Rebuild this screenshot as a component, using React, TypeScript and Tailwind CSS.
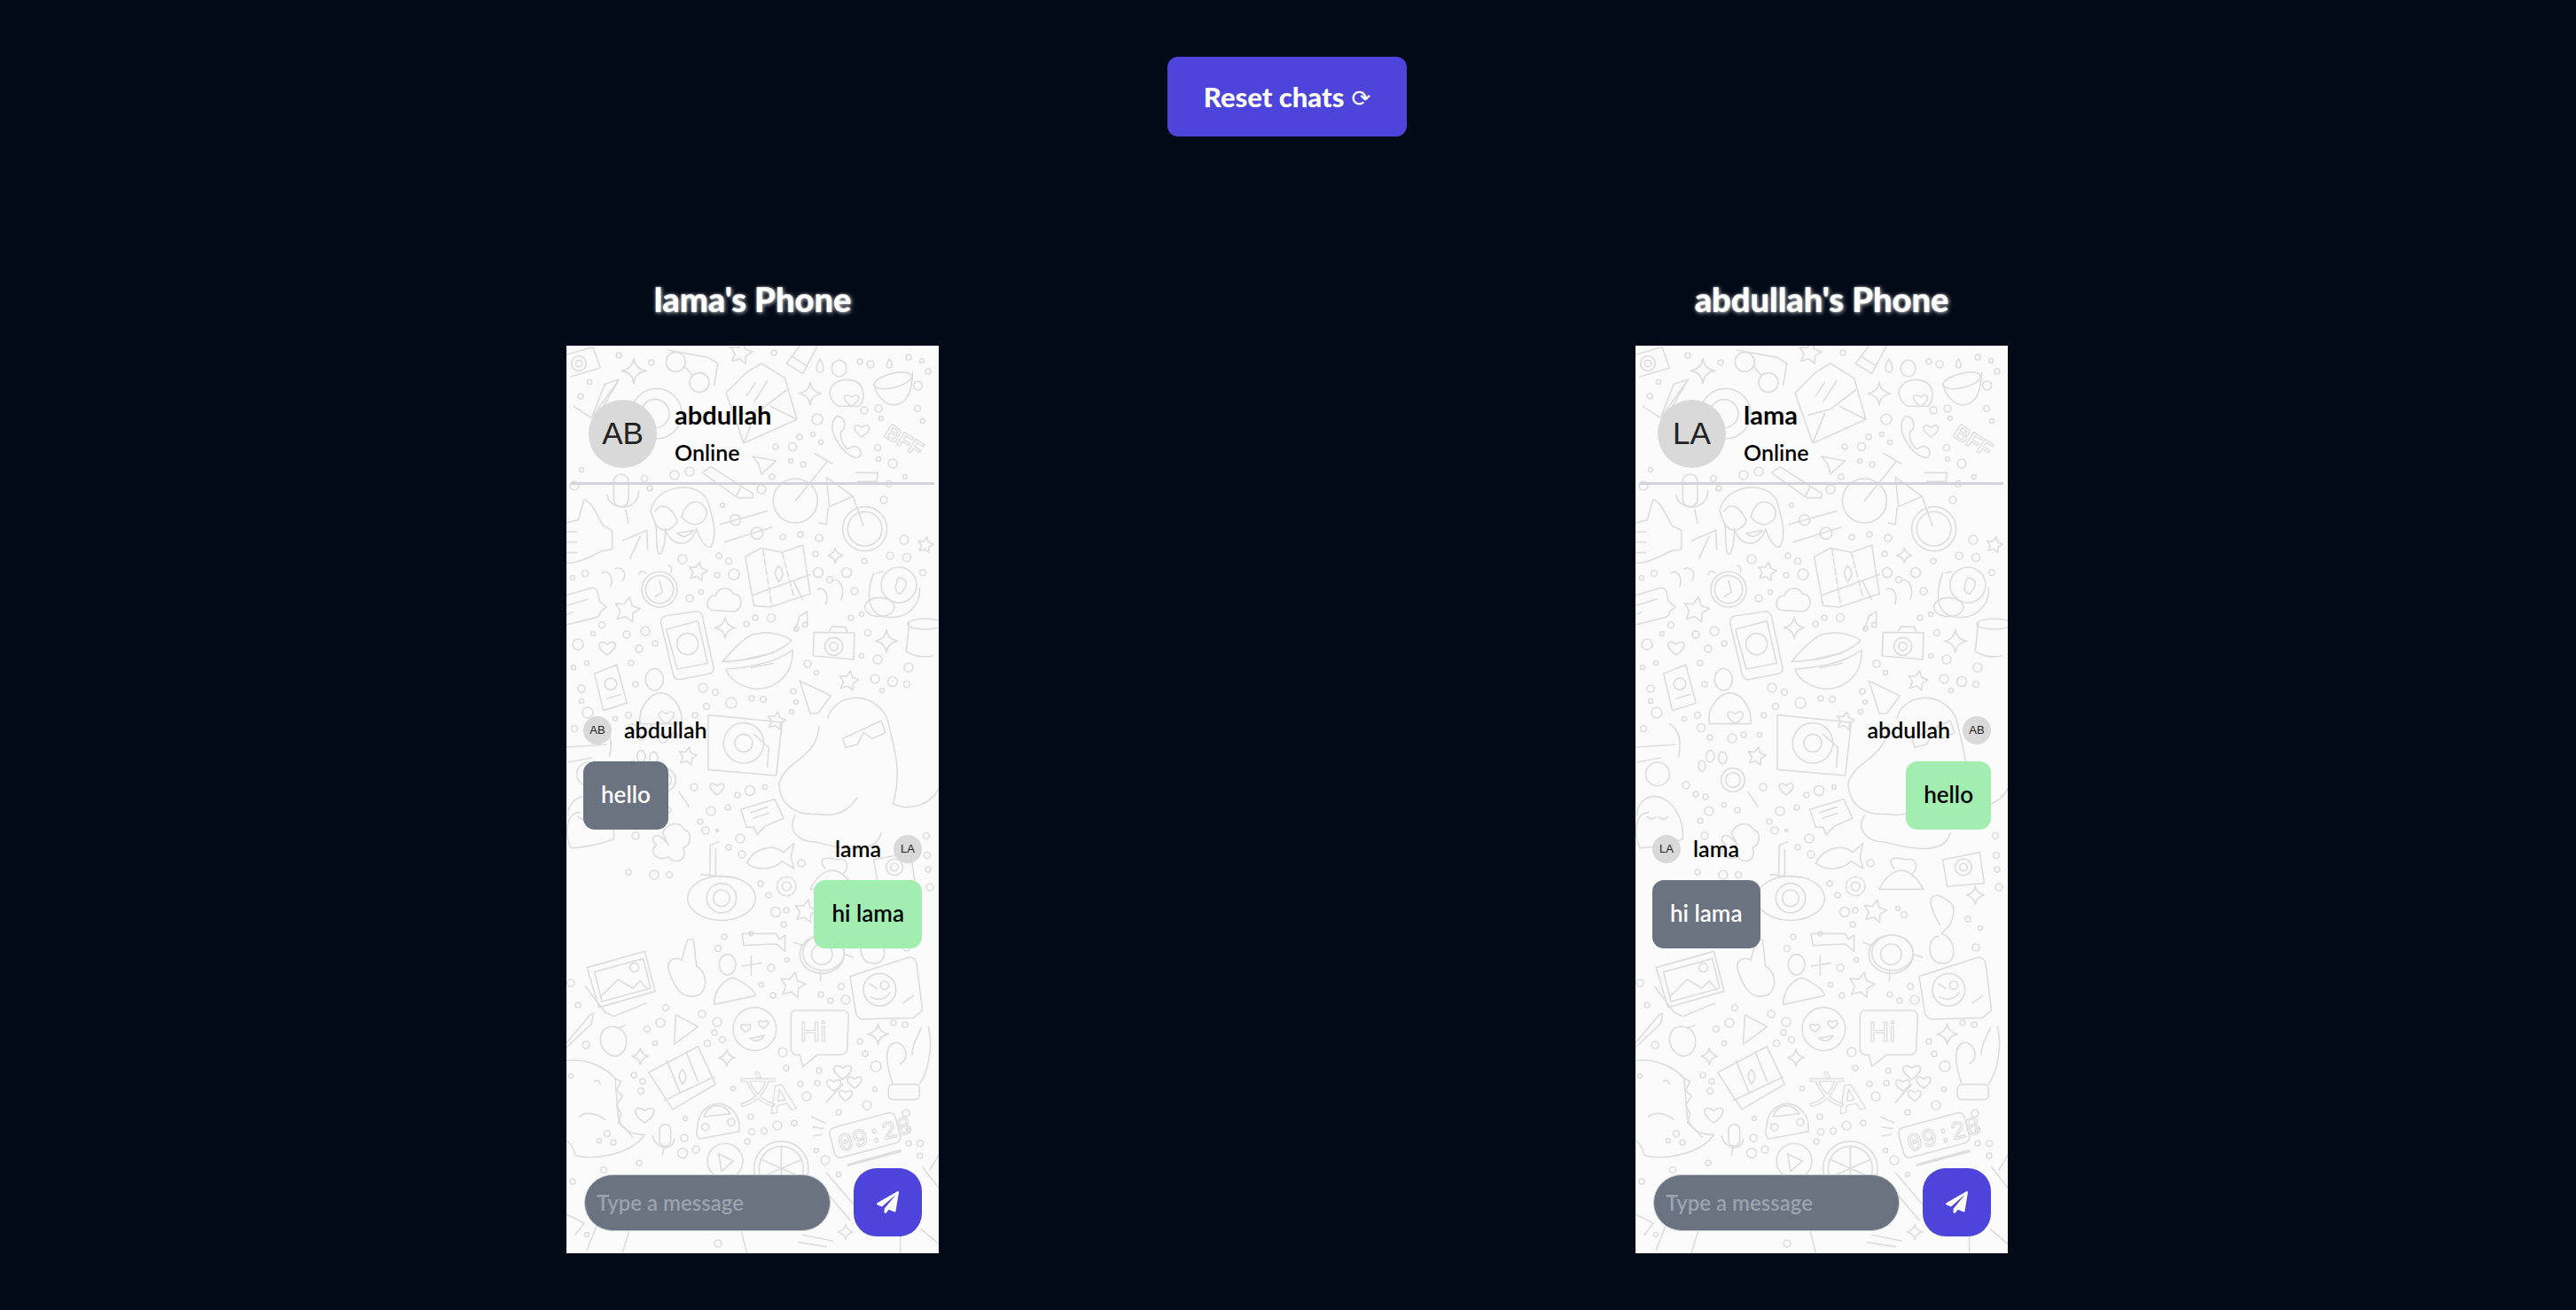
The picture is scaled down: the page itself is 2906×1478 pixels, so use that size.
import { FaPaperPlane } from "react-icons/fa";

const font = "font-['Lato',sans-serif]";

// [x, y, r] bubbles scattered over the wallpaper, in phone pixels
const dots = [
  [59,11,3],[96,19,3],[26,41,2.5],[16,57,3],[234,8,3],[331,18,3],[343,21,4],[386,13,3],[401,17,2.5],[408,29,3],[336,73,4],[352,71,4],[355,82,2.5],[396,71,3.5],[402,85,2.5],[283,83,6],[263,103,3],[278,100,2.5],[287,109,2.5],[236,114,3],[255,114,4.5],[351,115,3.5],[352,128,2.5],[368,133,5],[253,130,2.5],[267,134,3],[232,148,3],[220,162,5],[382,148,2.5],[364,156,3.5],[358,174,4],[139,142,5],[122,146,5],[88,150,3.5],[17,140,2.5],[9,158,5],[94,161,3],[176,180,2.5],[244,216,3],[264,213,3],[285,217,4],[281,235,3],[336,243,3],[365,237,4],[384,239,4.5],[381,219,5],[402,256,3.5],[284,256,5.5],[297,264,3.5],[316,256,5.5],[325,277,4],[321,307,3],[333,303,2.5],[340,324,3.5],[213,307,3],[231,307,4.5],[203,314,3],[131,241,5],[172,237,3],[183,243,3.5],[170,259,3],[189,258,6],[152,278,2.5],[139,285,4],[21,257,3.5],[7,262,2.5],[40,315,3.5],[30,325,2.5],[68,326,4],[89,322,5],[100,336,3],[82,342,4],[13,337,6],
  [8,363,2.5],[23,358,2.5],[73,358,3],[78,382,3],[17,387,4],[17,401,2.5],[24,414,6],[55,421,2.5],[70,417,3.5],[74,431,4.5],[9,432,3.5],[84,442,3],[109,443,5],[122,439,3],[140,439,2.5],[145,417,3],[154,386,5],[168,391,3.5],[158,407,3.5],[186,403,6],[209,398,3],[222,399,3.5],[256,390,3],[259,402,2.5],[254,413,2.5],[272,359,4],[282,369,2.5],[333,350,2.5],[351,354,5],[386,363,5],[348,376,5],[368,379,5.5],[384,382,3.5],[356,389,2.5],
  [57,496,4],[68,506,3],[79,509,3],[100,518,2.5],[115,524,3],[83,525,5],[73,536,3],[78,553,4],[144,498,4],[193,507,3],[207,502,5.5],[224,498,2.5],[163,525,5],[182,521,3],[151,537,3],[157,547,4],[170,547,1.5],[196,556,5],[183,566,3],[198,574,4],[265,584,4],[406,553,3.5],[407,575,3.5],[408,591,3],[410,611,4],[99,597,5],[116,597,3.5],[70,594,3],[219,607,3],[228,620,3],[236,639,5.5],[248,637,3],[245,653,3],[296,635,2.5],[303,642,3.5],[375,647,3],[389,657,2.5],[178,667,3],[171,680,3.5],
  [231,702,4],[220,721,2.5],[249,693,2.5],[233,733,3],[287,732,3],[298,739,3],[315,738,5],[310,723,3.5],[384,679,4],[5,719,4],[13,744,3],[112,747,3.5],[91,771,3.5],[106,764,5],[100,787,2.5],[153,754,4],[170,763,5],[167,775,3],[176,783,3.5],[159,787,3.5],[244,797,5],[22,789,4],[248,815,3],[188,838,2.5],[264,833,3],[283,832,3],[285,818,3],[271,847,5],[331,785,3],[337,799,3],[349,813,6],[348,839,2.5],[369,764,3],[382,766,3],[339,857,5],[307,865,3],[383,866,4],[386,885,2.5],[386,900,3],[399,900,3.5],[399,914,3],[282,908,2.5],[292,919,5],[307,935,2.5],[208,870,3],[209,887,3.5],[223,886,3.5],[238,880,5],[257,877,3],[204,898,3],[134,872,2.5],[133,894,4],[131,911,5.5],[146,907,4],[82,922,3],[42,930,3.5],[7,943,3],[23,1003,2.5],[171,1013,4],[5,824,2.5],[76,823,3],[86,830,3],[84,841,3.5],[46,889,3.5],[37,897,2.5],[53,899,3],
];

const star = (cx: number, cy: number, r: number) => {
  const pts: string[] = [];
  for (let i = 0; i < 10; i++) {
    const a = -Math.PI / 2 + 0.2 + (i * Math.PI) / 5;
    const d = i % 2 ? r * 0.5 : r;
    pts.push(`${cx + d * Math.cos(a)},${cy + d * Math.sin(a)}`);
  }
  return <polygon points={pts.join(" ")} strokeLinejoin="round" />;
};

const sparkle = (x: number, y: number, r: number) => (
  <path d={`M${x} ${y - r}Q${x + 4} ${y - 6} ${x + r} ${y}Q${x + 4} ${y + 6} ${x} ${y + r}Q${x - 4} ${y + 6} ${x - r} ${y}Q${x - 4} ${y - 6} ${x} ${y - r}Z`} />
);

const heart = (x: number, y: number, s: number) => (
  <path d={`M${x} ${y + 0.9 * s}C${x - 1.6 * s} ${y - 0.2 * s} ${x - 0.8 * s} ${y - s} ${x} ${y - 0.3 * s}C${x + 0.8 * s} ${y - s} ${x + 1.6 * s} ${y - 0.2 * s} ${x} ${y + 0.9 * s}Z`} />
);

const ring = (x: number, y: number, r: number) => <circle cx={x} cy={y} r={r} />;

// the chat wallpaper; doodle coordinates were read off 3x crops, so each group scales by a third
const Wallpaper = () => (
  <svg viewBox="0 0 420 1024" className="absolute inset-0 w-full h-full" fill="none" stroke="#dedede" strokeLinecap="round" strokeLinejoin="round" aria-hidden="true">
    <g strokeWidth="1.6">
      {dots.map(([x, y, r], i) => <circle key={i} cx={x} cy={y} r={r} />)}
    </g>
    <g transform="scale(0.3333)" strokeWidth="5">
      <path d="M0 30L90 5L115 75L15 105" />{ring(42,60,25)}{ring(42,60,11)}
      {sparkle(228,85,42)}
      {ring(370,55,33)}{ring(450,125,33)}<path d="M345 15L480 40L512 60L500 135M400 70L425 100" />
      {star(590,25,40)}
      <path d="M745 60L790 0M800 95L850 0M745 60L800 95M762 35L815 70" />
      <path d="M858 45C840 75 845 90 858 90C872 90 875 75 858 45ZM1093 45C1080 65 1082 75 1093 75C1104 75 1106 65 1093 45Z" />
      <ellipse cx="923" cy="77" rx="25" ry="28" />
      <path d="M540 160L610 90L660 60L740 110L780 250L600 330ZM585 235L660 215L745 150M600 330L640 230M780 250L690 205M610 170L640 125M635 190L680 120" />
      {sparkle(825,162,38)}
      <path d="M920 205C870 170 890 115 950 115C1005 115 1020 170 990 205Z" />{heart(965,182,26)}
      <ellipse cx="1105" cy="118" rx="65" ry="24" transform="rotate(-14 1105 118)" />
      <path d="M1040 130C1050 170 1080 205 1115 200C1150 195 1170 160 1172 90" />{ring(1190,135,15)}
      <path d="M25 205L85 245L130 130L178 115L100 248M85 245L178 115" />
      {ring(305,230,85)}{ring(300,230,48)}
      <path d="M905 250C885 290 930 365 980 380C1005 378 1000 345 975 340L950 350C930 330 925 310 930 290C950 280 945 240 915 238Z" />
      {heart(1000,285,27)}
      <text x="1070" y="305" fontFamily="Liberation Sans" fontWeight="700" fontSize="72" transform="rotate(32 1070 305)" strokeWidth="3.5">BFF</text>
      <path d="M630 375L710 390L660 435L650 400Z" />
      <path d="M460 430L490 410L630 500L630 515L580 515ZM590 480L575 510" />
      {ring(775,525,75)}{ring(1010,620,75)}{ring(1010,620,58)}
      <path d="M775 525L880 395M840 365L900 400M880 445L970 510L890 545L880 445M970 510L1005 610M980 430L1055 430L1050 460L985 460M885 550L880 605L855 600" />
      <rect x="160" y="435" width="50" height="110" rx="25" /><path d="M138 505C145 560 245 565 245 490M200 555L210 600" />
      <path d="M0 600L40 590L60 520C90 530 110 590 125 610L155 625L155 690L120 695C70 720 30 740 0 735M0 630H35M0 665H35M0 700H35" />
      <path d="M190 660L272 625L275 690M250 645L215 720" />
      <path d="M285 560C300 470 450 450 480 530C500 600 510 640 490 680C470 690 450 650 440 620C420 690 350 680 335 620C335 680 320 720 310 700C300 660 310 620 300 600ZM300 560C320 530 350 540 375 590C375 610 330 650 300 600M390 580C410 510 460 520 475 560C475 610 420 620 390 580M375 635Q400 660 430 625Z" />
      <path d="M520 605L680 560M535 665L695 615" />{ring(572,590,18)}{ring(645,635,20)}
      <path d="M605 715L660 685L730 700L800 675L825 840L750 865L690 885L635 880Z" />
      <path d="M665 690L695 880M730 700L770 850" strokeDasharray="22 10" />
      <path d="M630 845L825 775M718 745C695 770 715 790 718 800C725 790 745 770 718 745ZM770 800L800 860" />
      <path d="M120 770C140 755 160 780 150 815M165 755C185 745 210 770 190 795M850 825C870 815 890 840 878 875M900 795C920 785 945 815 930 860" />
      {ring(315,825,60)}{ring(315,825,47)}<path d="M315 795L325 835L300 850M245 775Q250 755 270 770M345 745Q360 745 355 765" />
      {star(445,765,33)}{star(1215,675,28)}{sparkle(910,710,25)}
      <path d="M490 895C465 880 480 845 505 845C515 815 555 815 565 840C600 840 600 895 565 900Z" />
      {ring(1125,810,60)}<path d="M1040 770C1010 850 1020 920 1100 920C1170 920 1200 860 1195 820M1050 770Q1060 765 1070 765M1125 785C1155 790 1160 810 1130 840C1110 840 1110 810 1125 785Z" /><ellipse cx="1060" cy="885" rx="50" ry="32" />
      <path d="M0 845L85 820Q100 818 105 835L112 865L135 885L115 900Q115 915 100 920L0 945M0 880L72 858M0 910L20 902" />
      {star(205,895,45)}
      <path d="M320 940Q318 920 335 915L435 900Q455 898 460 915L498 1090Q500 1105 485 1110L385 1130Q368 1132 362 1115ZM338 960L445 932L478 1075L375 1095Z" />{ring(410,1010,36)}
      {sparkle(537,955,35)}
      <path d="M775 960L790 915L815 900L815 940" />{ring(778,958,8)}{ring(808,945,8)}
      <path d="M528 1070C570 1020 620 970 650 975C680 965 740 980 762 998C720 1040 640 1065 528 1070ZM540 1095C600 1090 700 1080 765 1030C770 1110 710 1165 640 1162C590 1155 550 1130 540 1095ZM610 1060L700 1040M625 1090L700 1075" />
      <path d="M838 970L975 972L972 1062L835 1050ZM890 965L900 950L945 953L950 970" />{ring(905,1018,30)}{ring(905,1018,14)}
      {sparkle(1083,1000,38)}
      <ellipse cx="1215" cy="942" rx="60" ry="18" /><path d="M1160 940L1150 1035Q1190 1060 1240 1050" />
      <path d="M95 1110L170 1080L205 1210L125 1235ZM138 1195L185 1180" />{ring(150,1145,20)}
      <ellipse cx="298" cy="1130" rx="30" ry="37" /><path d="M250 1280C240 1220 290 1175 320 1175C370 1180 395 1240 390 1280Z" />{heart(338,1255,28)}
      {heart(138,1020,30)}{star(955,1135,35)}
      <path d="M790 1135L895 1185L850 1245L825 1245Z" />
    </g>
    <g transform="translate(-5 400) scale(0.3333)" strokeWidth="5">
      <path d="M130 80C170 100 170 160 160 190M0 160L150 150M20 210L100 195" />{ring(90,250,40)}
      {ring(345,270,40)}{ring(345,270,25)}<path d="M395 310L430 360" />
      <ellipse cx="268" cy="190" rx="14" ry="20" /><ellipse cx="310" cy="195" rx="14" ry="20" /><ellipse cx="240" cy="222" rx="12" ry="18" />
      {star(425,190,32)}
      <path d="M495 50L745 75L725 255L495 235Z" />{ring(615,145,68)}{ring(615,145,30)}<path d="M650 115L700 160L695 225" />{star(725,70,32)}
      {heart(525,297,26)}
      <path d="M605 370L720 335L750 400L690 425L660 455L650 430L625 430ZM640 380L695 362M648 400L700 382" />
      <path d="M870 90C860 200 760 200 735 280C735 360 800 390 860 385C900 390 950 400 1000 330M790 390C760 440 800 480 860 480C930 500 1060 530 1080 450" />
      <path d="M900 60C920 -20 1050 -40 1100 60C1130 180 1150 250 1120 350C1180 380 1250 350 1275 300M950 130L1080 70L1095 110L1050 130L1020 110L1000 150L960 160Z" />
      <path d="M625 550C660 490 720 490 750 515L785 485L775 530L785 570L745 545C710 580 650 575 625 550Z" />
      <circle cx="760" cy="630" r="32" strokeDasharray="12 6" />{ring(760,630,15)}
      <ellipse cx="540" cy="670" rx="115" ry="75" /><circle cx="540" cy="670" r="50" />{ring(540,670,28)}<path d="M500 595L502 490L530 480M520 590V505M470 590L570 600" />
      <path d="M840 640C860 600 920 520 990 640ZM890 570C860 530 900 530 930 540C960 530 980 560 950 590" />
      <path d="M1055 540L1180 515L1195 620L1070 630Z" />{ring(1125,565,28)}{ring(1125,565,13)}
      {sparkle(1165,660,30)}{star(825,715,40)}
      <path d="M60 380C10 380 10 460 30 500C80 500 150 480 175 470C180 400 140 330 80 325C50 325 20 350 20 390M55 395Q70 410 85 395M95 395Q110 410 125 395" />
      <path d="M360 490L340 450C360 410 400 410 415 440C440 440 440 490 410 500C430 540 380 560 360 530C320 550 290 510 320 490C290 470 320 430 360 490Z" />
      <path d="M610 790L725 790L735 810L755 795V850L725 825L615 830Z" />{ring(640,790,7)}
      <ellipse cx="880" cy="860" rx="75" ry="65" />{ring(880,860,35)}<path d="M1045 760C1010 700 1000 660 1040 660C1080 680 1110 690 1080 760L1050 790C1100 800 1110 900 1050 890C1000 890 1000 800 1040 800" />
    </g>
    <g transform="translate(0 670) scale(0.3333)" strokeWidth="5">
      <path d="M70 95L265 40L300 175L110 230ZM95 110L260 65L285 165L120 210ZM115 195L175 135L225 165L250 140L275 170M65 160L130 245L160 260L270 215" />{ring(230,95,15)}
      <path d="M345 100C340 60 380 60 390 70L410 0L430 0L440 90C480 110 480 180 440 190C400 200 370 180 345 100Z" />
      <ellipse cx="545" cy="85" rx="28" ry="35" /><path d="M500 220C500 160 545 130 565 130C590 140 640 170 640 190Z" />
      <path d="M625 55V120M595 90L660 80" />
      <ellipse cx="870" cy="45" rx="70" ry="60" /><path d="M860 110V140M800 20L770 10M940 50L970 60" />
      {star(765,155,45)}
      <path d="M960 125L1160 60Q1180 60 1185 80L1205 240L1175 265L1000 270Q985 265 980 250Z" />{ring(1060,170,55)}{ring(1077,155,14)}<path d="M1025 150L1050 165M1030 195Q1070 215 1095 180M1140 215L1175 190" />
      <path d="M0 350L80 255L92 250L85 285L0 365" />
      <path d="M160 295C100 290 100 380 160 395C215 395 220 300 160 295M175 300L200 290" />
      <path d="M370 255L445 295L365 355Z" />
      {ring(637,303,73)}{heart(607,297,18)}{heart(667,285,18)}<path d="M620 335Q650 355 670 325Z" />
      <path d="M775 240L935 240Q955 240 955 260L950 375Q945 390 925 390L850 390L800 430L790 390L775 390Q760 385 760 370L760 260Q760 240 775 240Z" />
      <text x="790" y="345" fontFamily="Liberation Sans" fontSize="95" strokeWidth="3.5">Hi</text>
      {sparkle(1055,320,35)}{sparkle(250,395,28)}{sparkle(543,400,28)}
      <path d="M278 450L445 362L505 490L360 575ZM340 410L385 520M405 380L445 480M330 545L500 465" />
      <path d="M392 440C370 465 390 480 392 490C400 480 415 465 392 440Z" />
      <text x="585" y="555" fontFamily="Noto Sans CJK SC" fontSize="125" strokeWidth="3.5">文</text>
      <text x="690" y="590" fontFamily="Liberation Sans" fontWeight="700" fontSize="130" strokeWidth="3.5" transform="rotate(-12 690 590)">A</text>
      {heart(935,445,32)}{heart(905,490,26)}{heart(975,480,26)}{heart(945,525,24)}<path d="M935 490L880 550" />
      <path d="M1105 490C1080 420 1075 360 1110 350C1140 340 1170 400 1130 420M1195 490C1230 440 1240 350 1225 295M1170 390C1170 350 1190 330 1200 300" />
      <rect x="1090" y="490" width="105" height="52" rx="15" />
      <path d="M0 410C60 400 130 430 165 470L175 600C190 660 240 660 265 660C220 730 80 750 30 730C20 690 0 680 0 680M95 480Q110 470 115 490M45 600C60 580 110 590 130 610" />
      <path d="M165 470L185 480L170 510L190 530L170 560L185 590L175 620L200 640L225 670" />
      {heart(265,590,34)}
      <rect x="315" y="625" width="38" height="75" rx="19" /><path d="M292 665C300 710 360 720 365 675M330 705L325 730" />
      <path d="M440 660L445 620C460 540 560 530 585 620L585 650L450 675ZM465 600C480 555 530 550 555 590Z" />{ring(470,635,12)}{ring(558,618,12)}
      <g transform="rotate(-15 1010 660)">
        <rect x="895" y="610" width="230" height="105" rx="20" />
        <text x="915" y="695" fontFamily="Liberation Mono" fontSize="85" strokeWidth="3.5">09:28</text>
        <path d="M930 745L1110 745" strokeWidth="10" />
      </g>
      <path d="M830 600L875 620M835 635L870 640M835 665L865 660" />
      {ring(537,750,60)}<path d="M515 725L565 750L525 785Z" />
      {ring(727,775,92)}{ring(727,775,75)}<path d="M727 700V850M660 745L795 805M660 805L795 745" />
      <path d="M850 820L960 950M880 790L1000 930M0 930L60 960L30 1000M70 1050L110 950L220 960L190 1060M610 1060L590 980M800 1000L900 1020M785 1025L880 1040" />
      {sparkle(945,990,25)}<path d="M1230 780L1260 730M1205 770L1260 840M1020 1000L1130 1000L1130 1062M1200 980L1260 1030" />
    </g>
  </svg>
);

const Avatar = ({ label, big }: { label: string; big?: boolean }) => (
  <div className={`flex items-center justify-center rounded-full bg-[#d9d9d9] text-[#222] font-['Liberation_Sans',sans-serif] shrink-0 ${big ? "w-[77px] h-[77px] text-[35px]" : "w-8 h-8 text-[13px]"}`}>
    {label}
  </div>
);

const Message = ({ author, initials, text, mine }: { author: string; initials: string; text: string; mine: boolean }) => (
  <div className={`flex flex-col ${mine ? "items-end" : "items-start"}`}>
    <div className={`flex items-center gap-[14px] h-8 ${mine ? "flex-row-reverse" : ""}`}>
      <Avatar label={initials} />
      <span className="text-[25px] font-semibold text-black">{author}</span>
    </div>
    <div className={`mt-[19px] h-[77px] px-[20px] pb-[3px] flex items-center justify-center rounded-[13px] text-[26px] font-semibold ${mine ? "bg-[#a1eeb0] text-black" : "bg-[#6b7280] text-white"}`}>
      {text}
    </div>
  </div>
);

const Phone = ({ owner, contact, initials, messages }: { owner: string; contact: string; initials: string; messages: { author: string; initials: string; text: string; mine: boolean }[] }) => (
  <div className="flex flex-col items-center">
    <h2 className="h-[80px] text-[38px] font-black text-white [text-shadow:1px_1px_5px_#bbbbbb,0_0_2px_#dddddd] leading-[54px]">{owner}'s Phone</h2>
    <div className="relative w-[420px] h-[1024px] bg-[#fbfbfb] flex flex-col overflow-hidden">
      <Wallpaper />
      <div className="relative mx-[5px] h-[157px] border-b-[3px] border-[#d1d5db] flex items-start pt-[61px] pl-[20px] gap-[20px]">
        <Avatar label={initials} big />
        <div className="flex flex-col">
          <span className="text-[29px] leading-[36px] font-bold text-black -mt-[1px]">{contact}</span>
          <span className="text-[25px] leading-[32px] font-semibold text-black mt-[8px]">Online</span>
        </div>
      </div>
      <div className="relative flex-1 px-[19px] pt-[261px] flex flex-col gap-[6px]">
        {messages.map((m, i) => <Message key={i} {...m} />)}
      </div>
      <div className="relative flex items-center justify-between pl-[20px] pr-[19px] pb-[19px]">
        <input
          placeholder="Type a message"
          readOnly
          className="w-[278px] h-[64px] rounded-full bg-[#6b7280] border border-[#c5c9d0] px-[13px] text-[24px] font-semibold outline-none placeholder:text-[#9ca3af]"
        />
        <button className="w-[77px] h-[77px] rounded-[26px] bg-[#4d44dc] flex items-center justify-center text-white">
          <FaPaperPlane size={25} />
        </button>
      </div>
    </div>
  </div>
);

export default function App() {
  return (
    <div className={`h-[1478px] bg-[#020a18] overflow-hidden flex flex-col items-center pt-[64px] pr-[2px] ${font}`}>
      <button className="w-[270px] h-[90px] rounded-[12px] bg-[#4d44dc] text-white text-[31px] font-black flex items-center justify-center gap-2">
        Reset chats <span className="text-[26px] font-normal font-['DejaVu_Sans',sans-serif] mt-1">⟳</span>
      </button>
      <div className="flex gap-[786px] mt-[156px]">
        <Phone
          owner="lama"
          contact="abdullah"
          initials="AB"
          messages={[
            { author: "abdullah", initials: "AB", text: "hello", mine: false },
            { author: "lama", initials: "LA", text: "hi lama", mine: true },
          ]}
        />
        <Phone
          owner="abdullah"
          contact="lama"
          initials="LA"
          messages={[
            { author: "abdullah", initials: "AB", text: "hello", mine: true },
            { author: "lama", initials: "LA", text: "hi lama", mine: false },
          ]}
        />
      </div>
    </div>
  );
}
